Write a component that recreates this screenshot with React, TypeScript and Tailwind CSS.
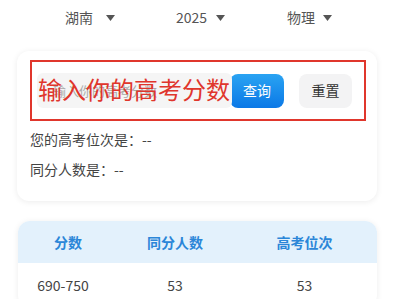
import React from 'react';

const Caret = () => (
  <svg width="9" height="6" viewBox="0 0 9 6" className="shrink-0">
    <path d="M0 0 L9 0 L4.5 6 Z" fill="#555" />
  </svg>
);

const rows = [{ score: '690-750', same: '53', rank: '53' }];

export default function App() {
  return (
    <div
      className="w-[400px] h-[299px] overflow-hidden bg-white text-[#444]"
      style={{ fontFamily: '"Noto Sans CJK SC", "Noto Sans", sans-serif' }}
    >
      {/* filters */}
      <div className="flex items-center h-[35px] text-[14px] text-[#555]">
        <div className="flex items-center gap-[13px] ml-[65px]">
          <span>湖南</span>
          <Caret />
        </div>
        <div className="flex items-center gap-[9px] ml-[61px]">
          <span>2025</span>
          <Caret />
        </div>
        <div className="flex items-center gap-[8px] ml-[62px]">
          <span>物理</span>
          <Caret />
        </div>
      </div>

      {/* query card */}
      <div className="ml-[17px] w-[360px] mt-[16px] rounded-xl bg-white shadow-[0_1px_6px_rgba(0,0,0,0.08)] pl-[13px] pr-[11px] pt-[9px] pb-[21px]">
        <div className="h-[61px] border-2 border-[#e0362c] flex items-center pl-[5px] pr-[12px]">
          <div className="relative w-[195px] h-[35px] rounded-md bg-[#f5f5f5]">
            <span className="absolute left-[16px] top-[8px] text-[13px] text-[#aaa]">输入你的高考分数</span>
            <span className="absolute left-[1px] top-[-2px] text-[24px] leading-[36px] text-[#e0362c] whitespace-nowrap">
              输入你的高考分数
            </span>
          </div>
          <button className="ml-[-2px] w-[54px] h-[34px] rounded-lg bg-gradient-to-b from-[#2aa3f2] to-[#0b78e6] text-white text-[14px]">
            查询
          </button>
          <button className="ml-auto w-[53px] h-[34px] rounded-lg bg-[#f3f3f4] text-[#333] text-[14px]">
            重置
          </button>
        </div>
        <div className="mt-[7px] text-[14px] leading-[22px]">您的高考位次是：--</div>
        <div className="mt-[8px] text-[14px] leading-[22px]">同分人数是：--</div>
      </div>

      {/* table */}
      <div className="ml-[18px] w-[359px] mt-[20px] rounded-xl bg-white shadow-[0_1px_6px_rgba(0,0,0,0.08)] overflow-hidden">
        <div className="grid grid-cols-[100px_114px_1fr] h-[42px] items-center bg-[#e3f1fc] text-[14px] font-bold text-[#2b86d8] text-center">
          <div>分数</div>
          <div>同分人数</div>
          <div>高考位次</div>
        </div>
        {rows.map((r) => (
          <div key={r.score} className="grid grid-cols-[100px_114px_1fr] h-[44px] items-center text-[14px] text-[#444] text-center">
            <div className="pr-[10px]">{r.score}</div>
            <div>{r.same}</div>
            <div>{r.rank}</div>
          </div>
        ))}
      </div>
    </div>
  );
}
